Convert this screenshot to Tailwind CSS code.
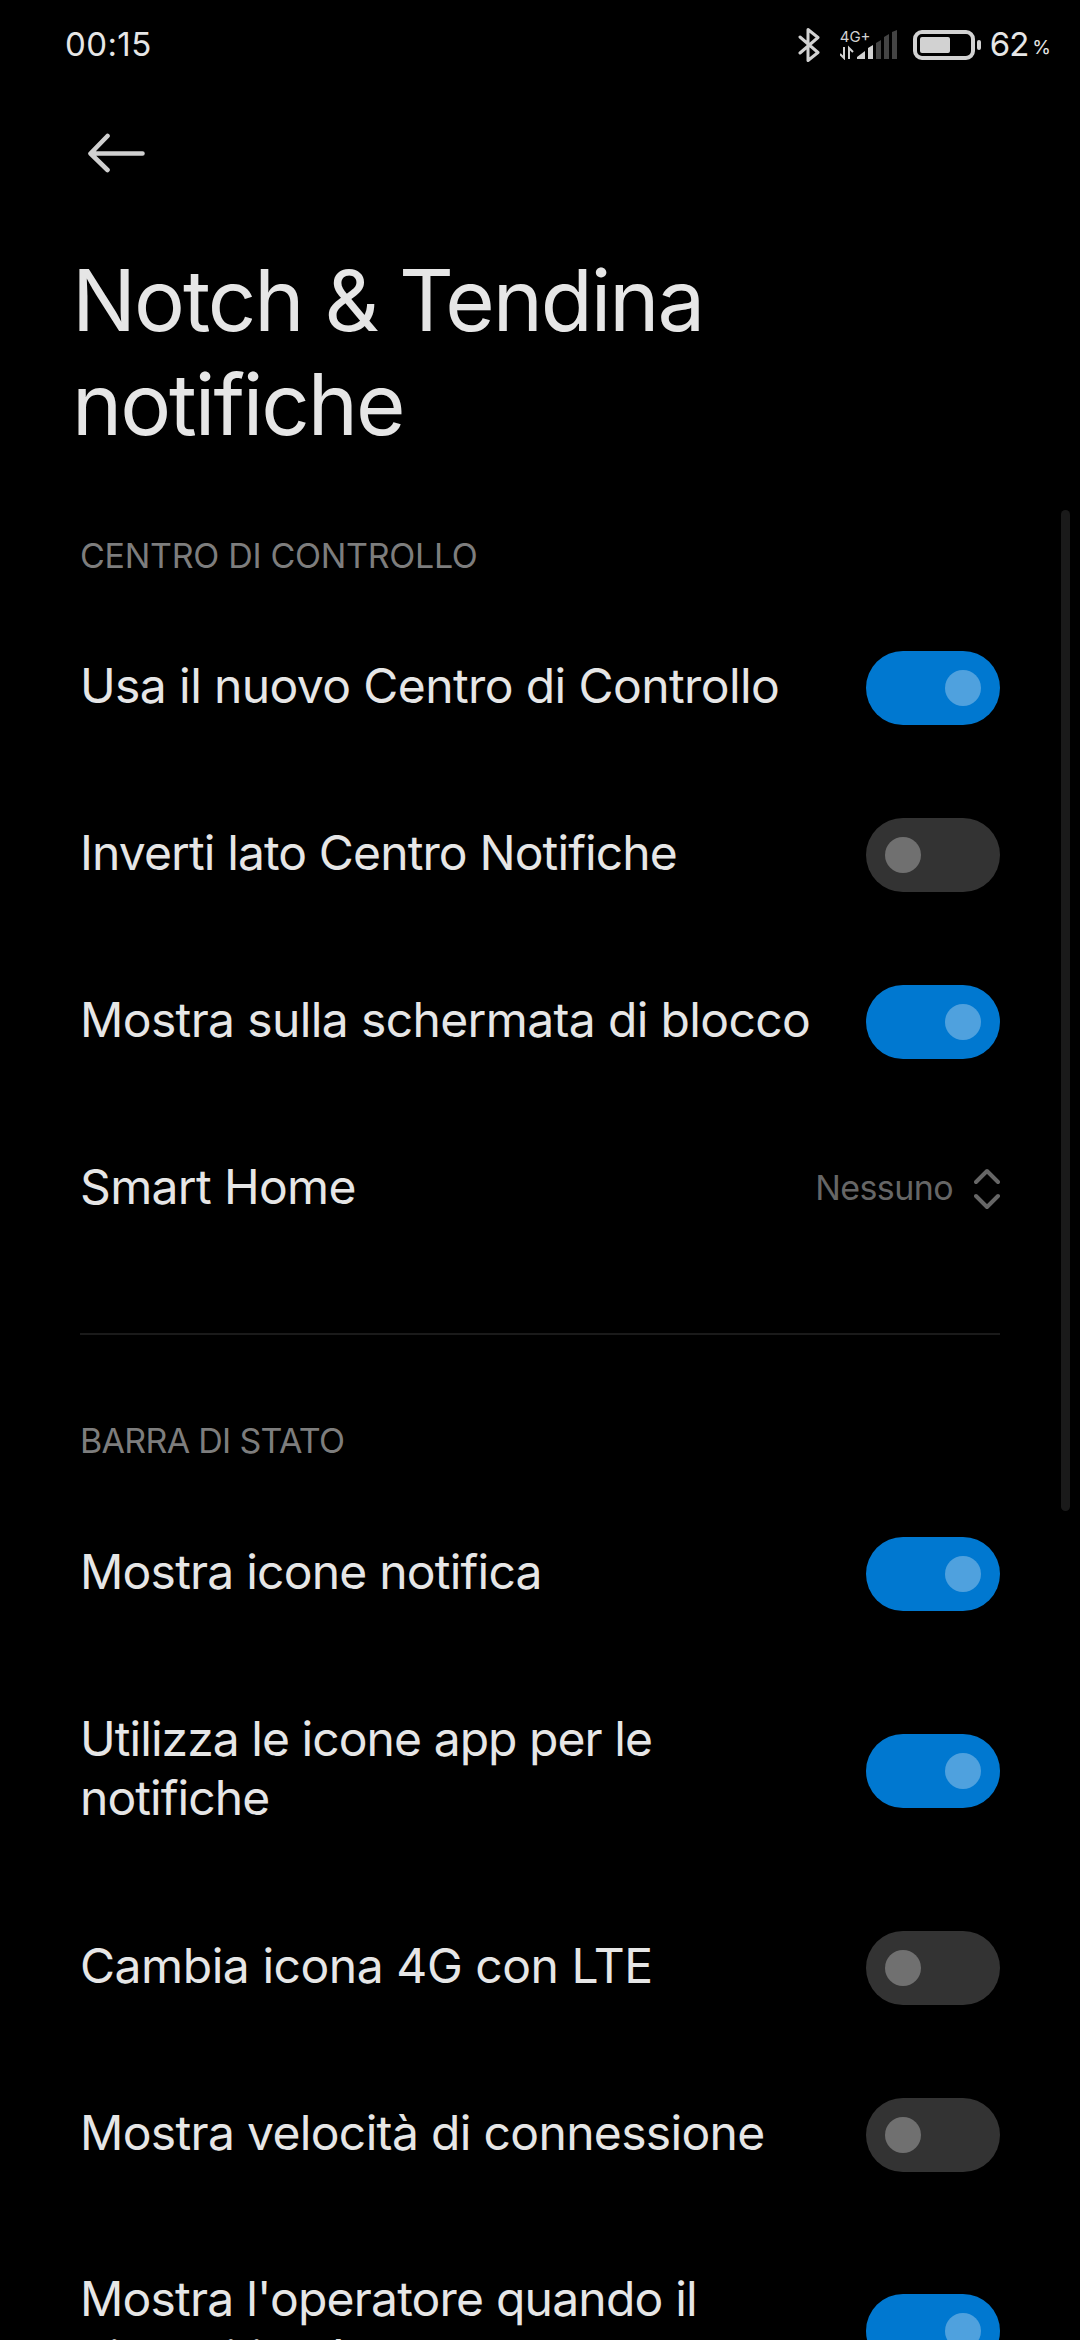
<!DOCTYPE html>
<html lang="it">
<head>
    <meta charset="UTF-8">
    <meta name="viewport" content="width=device-width, initial-scale=1.0">
    <title>Notch &amp; Tendina notifiche</title>
    <script src="https://cdn.jsdelivr.net/npm/@tailwindcss/browser@4"></script>
</head>
<body class="bg-black text-[#e6e6e6] font-['Inter',sans-serif]">
<div class="relative w-[1080px] h-[2340px] overflow-hidden">

    <!-- Status bar -->
    <header class="flex items-center justify-between h-[90px] pl-[65px] pr-[29px]">
        <span class="text-[33px] leading-[40px] tracking-[0.4px] -mt-[2px]">00:15</span>
        <div class="flex items-center">
            <svg class="w-[22px] h-[36px] mr-[20px]" viewBox="0 0 22 36" fill="none" stroke="#d2d2d2" stroke-width="3" stroke-linejoin="round" stroke-linecap="round">
                <path d="M2 10L20 25.500L10 33.500V2.500L20 10.500L2 26"/>
            </svg>
            <div class="relative flex flex-col w-[58px] h-[30px]">
                <span class="text-[15px] leading-[14px] text-[#d2d2d2]">4G+</span>
                <svg class="absolute left-0 top-0 w-[58px] h-[30px]" viewBox="0 0 58 30">
                    <path d="M0 24l4 4V17M13 22l-4-4v11" fill="none" stroke="#d2d2d2" stroke-width="2"/>
                    <path fill="#d2d2d2" d="M17 29v-2l8-6v8zM28 29V18l5-3v14z"/>
                    <path fill="#444" d="M36 29V13l5-3v19zM44 29V7l5-3v25zM52 29V2l5-2v29z"/>
                </svg>
            </div>
            <svg class="w-[70px] h-[30px] ml-[15px]" viewBox="0 0 70 30">
                <rect x="2" y="2" width="58" height="26" rx="7" fill="none" stroke="#d2d2d2" stroke-width="4"/>
                <rect x="7" y="7" width="30" height="16" rx="2" fill="#d2d2d2"/>
                <rect x="64" y="10" width="4" height="10" rx="2" fill="#d2d2d2"/>
            </svg>
            <span class="text-[33px] leading-[40px] ml-[7px] tracking-[-1px] -mt-[2px]">62</span>
            <span class="text-[19px] leading-[20px] ml-[4px] mt-[6px]">%</span>
        </div>
    </header>

    <!-- Title -->
    <div class="pl-[87px] pt-[43px] h-[162px]">
        <svg class="w-[60px] h-[40px]" viewBox="0 0 60 40" fill="none" stroke="#d0d0d0" stroke-width="4.600" stroke-linecap="round" stroke-linejoin="round">
            <path d="M20.500 3L3.500 20.500L20.500 37M5 20.500H55.500"/>
        </svg>
    </div>
    <h1 class="pl-[72px] h-[255px] -mt-[3px] text-[85px] leading-[104px] font-normal tracking-[-2.05px]">Notch &amp; Tendina<br>notifiche</h1>

    <main class="px-[80px]">
        <section class="pb-[61px] border-b-2 border-[#1a1a1a]">
            <h2 class="h-[100px] pt-[32px] text-[34px] leading-[40px] text-[#7d7d7d] tracking-[-0.3px]">CENTRO DI CONTROLLO</h2>
            <div class="flex items-center justify-between h-[167px]">
                <span class="text-[48px] leading-[59px] pb-[4px] tracking-[-0.6px]">Usa il nuovo Centro di Controllo</span>
                <div class="flex items-center justify-end w-[134px] h-[74px] px-[19px] rounded-full bg-[#0078d0]"><div class="size-[36px] rounded-full bg-[#4fa1de]"></div></div>
            </div>
            <div class="flex items-center justify-between h-[167px]">
                <span class="text-[48px] leading-[59px] pb-[4px] tracking-[-0.88px]">Inverti lato Centro Notifiche</span>
                <div class="flex items-center w-[134px] h-[74px] px-[19px] rounded-full bg-[#333]"><div class="size-[36px] rounded-full bg-[#707070]"></div></div>
            </div>
            <div class="flex items-center justify-between h-[167px]">
                <span class="text-[48px] leading-[59px] pb-[4px] tracking-[-0.63px]">Mostra sulla schermata di blocco</span>
                <div class="flex items-center justify-end w-[134px] h-[74px] px-[19px] rounded-full bg-[#0078d0]"><div class="size-[36px] rounded-full bg-[#4fa1de]"></div></div>
            </div>
            <div class="flex items-center justify-between h-[167px]">
                <span class="text-[48px] leading-[59px] pb-[4px] tracking-[-0.65px]">Smart Home</span>
                <div class="flex items-center gap-[21px]">
                    <span class="text-[34px] leading-[40px] pb-[2px] text-[#666] tracking-[-0.6px]">Nessuno</span>
                    <svg class="w-[26px] h-[42px]" viewBox="0 0 26 42" fill="none" stroke="#666" stroke-width="4" stroke-linecap="round" stroke-linejoin="round">
                        <path d="M2 14L13 3L24 14M2 28L13 39L24 28"/>
                    </svg>
                </div>
            </div>
        </section>

        <section>
            <h2 class="h-[155px] pt-[86px] text-[34px] leading-[40px] text-[#7d7d7d] tracking-[-0.7px]">BARRA DI STATO</h2>
            <div class="flex items-center justify-between h-[167px]">
                <span class="text-[48px] leading-[59px] pb-[4px] tracking-[-0.78px]">Mostra icone notifica</span>
                <div class="flex items-center justify-end w-[134px] h-[74px] px-[19px] rounded-full bg-[#0078d0]"><div class="size-[36px] rounded-full bg-[#4fa1de]"></div></div>
            </div>
            <div class="flex items-center justify-between h-[227px]">
                <span class="text-[48px] leading-[59px] pb-[5px] tracking-[-0.94px]">Utilizza le icone app per le<br>notifiche</span>
                <div class="flex items-center justify-end w-[134px] h-[74px] px-[19px] rounded-full bg-[#0078d0]"><div class="size-[36px] rounded-full bg-[#4fa1de]"></div></div>
            </div>
            <div class="flex items-center justify-between h-[167px]">
                <span class="text-[48px] leading-[59px] pb-[5px] tracking-[-0.45px]">Cambia icona 4G con LTE</span>
                <div class="flex items-center w-[134px] h-[74px] px-[19px] rounded-full bg-[#333]"><div class="size-[36px] rounded-full bg-[#707070]"></div></div>
            </div>
            <div class="flex items-center justify-between h-[167px]">
                <span class="text-[48px] leading-[59px] pb-[5px] tracking-[-0.66px]">Mostra velocità di connessione</span>
                <div class="flex items-center w-[134px] h-[74px] px-[19px] rounded-full bg-[#333]"><div class="size-[36px] rounded-full bg-[#707070]"></div></div>
            </div>
            <div class="flex items-center justify-between h-[226px]">
                <span class="text-[48px] leading-[59px] pb-[6px] tracking-[-0.79px]">Mostra l'operatore quando il<br>dispositivo è bloccato</span>
                <div class="flex items-center justify-end w-[134px] h-[74px] px-[19px] rounded-full bg-[#0078d0]"><div class="size-[36px] rounded-full bg-[#4fa1de]"></div></div>
            </div>
        </section>
    </main>

    <!-- Scrollbar -->
    <div class="absolute left-[1061px] top-[510px] w-[9px] h-[1001px] rounded-full bg-[#1a1a1a]"></div>
</div>
</body>
</html>
